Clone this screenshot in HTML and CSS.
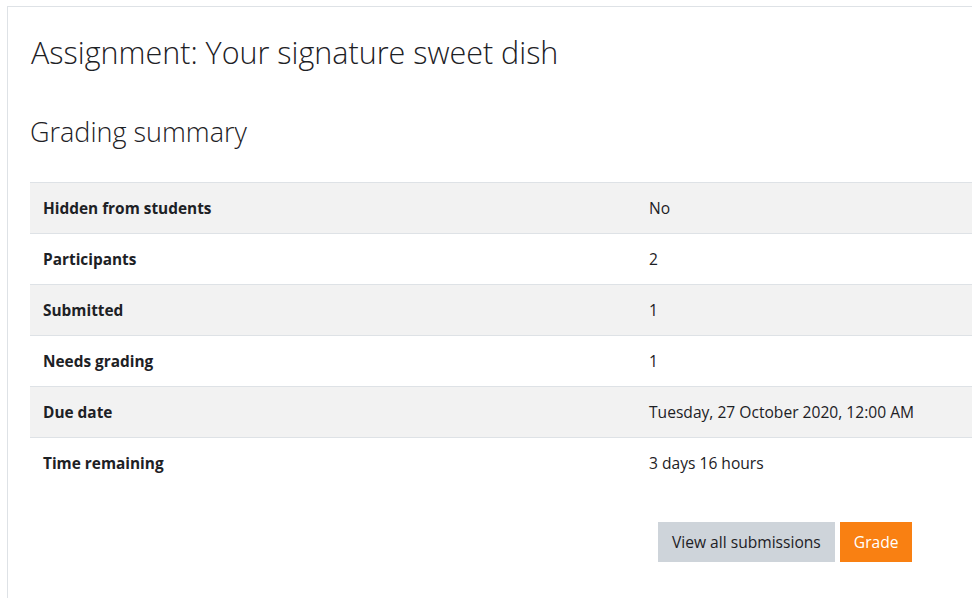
FILE: index.html
```html
<!DOCTYPE html>
<html lang="en">
<head>
  <meta charset="UTF-8">
  <meta name="viewport" content="width=device-width, initial-scale=1.0">
  <title>Assignment: Your signature sweet dish</title>
  <link rel="stylesheet" href="styles.css">
</head>
<body>
  <div class="page">
    <div class="card">
      <h2 class="page-title">Assignment: Your signature sweet dish</h2>

      <div class="summary">
        <h3 class="summary-title">Grading summary</h3>
        <table class="summary-table">
          <tbody>
            <tr>
              <th>Hidden from students</th>
              <td>No</td>
            </tr>
            <tr>
              <th>Participants</th>
              <td>2</td>
            </tr>
            <tr>
              <th>Submitted</th>
              <td>1</td>
            </tr>
            <tr>
              <th>Needs grading</th>
              <td>1</td>
            </tr>
            <tr>
              <th>Due date</th>
              <td>Tuesday, 27 October 2020, 12:00 AM</td>
            </tr>
            <tr>
              <th>Time remaining</th>
              <td>3 days 16 hours</td>
            </tr>
          </tbody>
        </table>

        <div class="actions">
          <a class="btn btn-secondary" href="#">View all submissions</a>
          <a class="btn btn-primary" href="#">Grade</a>
        </div>
      </div>
    </div>
  </div>
</body>
</html>
```

FILE: styles.css
```css
* {
  margin: 0;
  padding: 0;
  box-sizing: border-box;
}

html, body {
  overflow: hidden;
}

body {
  font-family: 'Open Sans', 'Noto Sans', sans-serif;
  font-size: 15.6px;
  color: #1d2125;
  background-color: #fff;
}

.page {
  padding: 6px 0 0 7px;
  width: 1100px;
}

.card {
  border-top: 1px solid #dee2e6;
  border-left: 1px solid #dee2e6;
  padding: 22px 0 40px 22px;
  min-height: 620px;
}

.page-title {
  font-size: 30.5px;
  font-weight: 300;
  line-height: 46px;
  margin-bottom: 38px;
  padding-left: 1px;
}

.summary-title {
  font-size: 27px;
  font-weight: 300;
  line-height: 38px;
  margin-bottom: 31px;
}

.summary-table {
  width: 1050px;
  border-collapse: collapse;
}

.summary-table tr {
  height: 51px;
  border-top: 1px solid #dee2e6;
}

.summary-table tr:nth-child(odd) {
  background-color: #f2f2f2;
}

.summary-table th,
.summary-table td {
  padding: 0 12px;
  text-align: left;
  vertical-align: middle;
}

.summary-table th {
  width: 607px;
  padding-left: 13px;
  font-size: 15.4px;
  font-weight: 700;
}

.actions {
  padding: 33px 0 0 628px;
  display: flex;
  gap: 5px;
}

.btn {
  display: inline-block;
  height: 40px;
  line-height: 40px;
  padding: 0 14px;
  font-size: 15.6px;
  text-decoration: none;
}

.btn-secondary {
  background-color: #ced4da;
  color: #1d2125;
}

.btn-primary {
  background-color: #f98012;
  color: #fff;
}
```
